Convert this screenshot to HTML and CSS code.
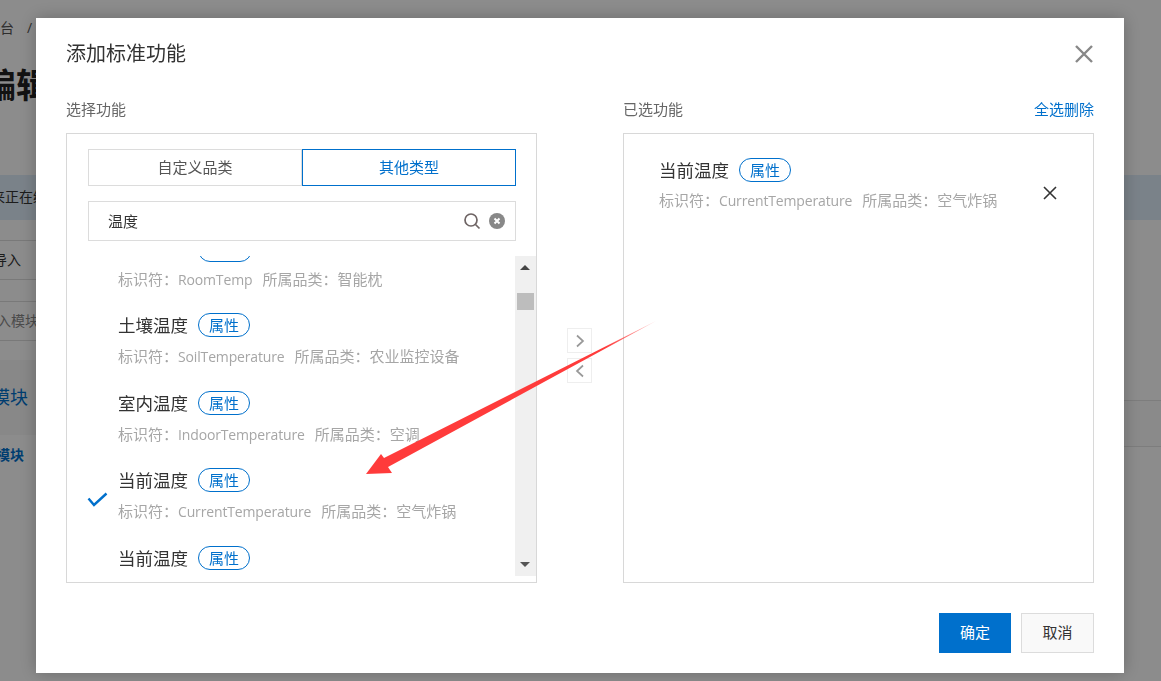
FILE: index.html
```html
<!DOCTYPE html>
<html lang="zh-CN">
<head>
  <meta charset="UTF-8" />
  <title>添加标准功能</title>
  <link rel="stylesheet" href="styles.css">
</head>
<body>
  <!-- PAGE BEHIND THE DIALOG -->
  <div class="page">
    <div class="crumb"><span>平台</span><span class="crumb-sep">/</span></div>
    <div class="page-title">编辑</div>
    <div class="notice">来正在编辑</div>
    <div class="page-input page-input-first">请导入</div>
    <div class="page-input page-input-second">输入模块名</div>
    <div class="module-wrap">
      <div class="module-side">
        <div class="module-band">默认模块</div>
        <div class="module-row">默认模块</div>
      </div>
      <div class="module-table">
        <div class="table-row"></div>
      </div>
    </div>
  </div>

  <div class="mask"></div>

  <!-- DIALOG -->
  <div class="dialog">
    <div class="dialog-head">
      <h2>添加标准功能</h2>
      <svg class="close-icon" width="20" height="20" viewBox="0 0 20 20"><path d="M2 2 18 18M18 2 2 18" /></svg>
    </div>

    <div class="columns">
      <div class="col">
        <div class="col-label"><span>选择功能</span></div>
        <div class="box box-left">
          <div class="tabs">
            <div class="tab">自定义品类</div>
            <div class="tab tab-on">其他类型</div>
          </div>
          <div class="search">
            <span class="search-text">温度</span>
            <svg class="search-icon" width="18" height="18" viewBox="0 0 18 18"><circle cx="8" cy="8" r="6" /><path d="M12.5 12.5 16.5 16.5" /></svg>
            <svg class="clear-icon" width="16" height="16" viewBox="0 0 16 16"><circle cx="8" cy="8" r="8" /><path d="M5.5 5.5 10.5 10.5M10.5 5.5 5.5 10.5" /></svg>
          </div>
          <div class="list-wrap">
            <div class="list">
              <div class="item item-cut">
                <div class="item-meta">标识符：<span class="ident">RoomTemp</span><span class="gap">所属品类：智能枕</span></div>
              </div>
              <div class="item">
                <div class="item-name">土壤温度<span class="tag">属性</span></div>
                <div class="item-meta">标识符：<span class="ident">SoilTemperature</span><span class="gap">所属品类：农业监控设备</span></div>
              </div>
              <div class="item">
                <div class="item-name">室内温度<span class="tag">属性</span></div>
                <div class="item-meta">标识符：<span class="ident">IndoorTemperature</span><span class="gap">所属品类：空调</span></div>
              </div>
              <div class="item">
                <svg class="check" width="21" height="16" viewBox="0 0 21 16"><path d="M1.5 6.5 7 13 19.5 1.5" /></svg>
                <div class="item-name">当前温度<span class="tag">属性</span></div>
                <div class="item-meta">标识符：<span class="ident">CurrentTemperature</span><span class="gap">所属品类：空气炸锅</span></div>
              </div>
              <div class="item">
                <div class="item-name">当前温度<span class="tag">属性</span></div>
              </div>
            </div>
            <div class="scrollbar">
              <span class="arrow-up"></span>
              <span class="thumb"></span>
              <span class="arrow-down"></span>
            </div>
          </div>
        </div>
      </div>

      <div class="mover">
        <div class="move-btn"><svg width="10" height="14" viewBox="0 0 10 14"><path d="M2 1.5 8 7 2 12.5" /></svg></div>
        <div class="move-btn"><svg width="10" height="14" viewBox="0 0 10 14"><path d="M8 1.5 2 7 8 12.5" /></svg></div>
      </div>

      <div class="col">
        <div class="col-label"><span>已选功能</span><a class="link">全选删除</a></div>
        <div class="box box-right">
          <div class="picked">
            <div>
              <div class="item-name">当前温度<span class="tag">属性</span></div>
              <div class="item-meta">标识符：<span class="ident">CurrentTemperature</span><span class="gap">所属品类：空气炸锅</span></div>
            </div>
            <svg class="remove-icon" width="14" height="14" viewBox="0 0 14 14"><path d="M1 1 13 13M13 1 1 13" /></svg>
          </div>
        </div>
      </div>
    </div>

    <div class="dialog-foot">
      <button class="btn btn-main">确定</button>
      <button class="btn">取消</button>
    </div>
  </div>

  <!-- annotation drawn over the screenshot -->
  <svg class="annot" width="1161" height="681" viewBox="0 0 1161 681">
    <defs>
      <linearGradient id="fade" gradientUnits="userSpaceOnUse" x1="656" y1="321" x2="605" y2="347">
        <stop offset="0" stop-color="#ff3b3b" stop-opacity=".3" />
        <stop offset="1" stop-color="#ff3b3b" />
      </linearGradient>
    </defs>
    <polygon fill="url(#fade)" points="656,321 384,458 381,454 366,474 392,473 388,467" />
  </svg>
</body>
</html>
```

FILE: styles.css
```css
*{box-sizing:border-box}
html,body{height:100%}
body{margin:0;overflow:hidden;background:#fff;color:#333;font-family:"Open Sans","Noto Sans CJK SC",sans-serif;font-size:15px}

/* page behind */
.page{height:681px;overflow:hidden;font-size:14px}
.crumb{height:50px;padding-top:18px;margin-left:-14px;line-height:20px;color:#555}
.crumb-sep{margin-left:13px}
.page-title{height:58px;margin-left:-18px;font-size:34px;line-height:70px;font-weight:bold;color:#222}
.notice{height:45px;margin-top:67px;line-height:43px;background:#dfedf9;text-indent:-9px}
.page-input{height:40px;border:1px solid #ddd;border-left:0;line-height:38px}
.page-input-first{width:60px;margin-top:20px;text-indent:-21px}
.page-input-second{width:60px;margin-top:21px;text-indent:-17px;color:#888}
.module-wrap{display:flex;margin-top:19px}
.module-side{width:200px}
.module-band{height:75px;font-size:18px;line-height:74px;text-indent:-44px;background:#f7f7f7;color:#0070cc}
.module-row{height:40px;line-height:40px;font-weight:bold;text-indent:-32px;color:#0070cc}
.module-table{flex:1;padding-top:40px}
.table-row{height:47px;border-top:1px solid #e4e4e4;border-bottom:1px solid #e4e4e4;background:#fcfcfc}
.mask{position:fixed;inset:0;background:rgba(0,0,0,.45)}

/* dialog */
.dialog{position:fixed;left:36px;top:18px;width:1088px;height:655px;padding:0 30px;background:#fff;box-shadow:0 0 16px rgba(0,0,0,.25);display:flex;flex-direction:column}
.dialog-head{height:72px;display:flex;align-items:center;justify-content:space-between}
.dialog-head h2{margin:0;font-size:20px;font-weight:normal;color:#333;line-height:28px}
.close-icon path{fill:none;stroke:#888;stroke-width:2.4}
.columns{display:flex;justify-content:space-between}
.col{width:471px}
.col-label{height:43px;display:flex;justify-content:space-between;align-items:center;color:#666;padding-bottom:6px}
.link{color:#0070cc}
.box{height:450px;border:1px solid #d8d8d8}

/* left box */
.box-left{padding:15px 0 0 21px}
.tabs{display:flex;width:428px}
.tab{width:214px;height:37px;border:1px solid #dcdcdc;line-height:34px;text-align:center;color:#555}
.tab-on{border-color:#0070cc;color:#0070cc}
.search{width:428px;height:40px;margin-top:15px;border:1px solid #dcdcdc;display:flex;align-items:center;padding:0 10px 0 19px}
.search-text{flex:1;color:#333;padding-bottom:2px}
.search-icon{margin-right:8px}
.search-icon circle,.search-icon path{fill:none;stroke:#6e6464;stroke-width:1.7}
.clear-icon circle{fill:#888}
.clear-icon path{stroke:#fff;stroke-width:2}
.list-wrap{display:flex;margin-left:-21px;margin-top:15px}
.list{width:448px;height:320px;overflow:hidden;position:relative}
.item{position:relative;height:77.5px;padding-left:51px}
.item-cut{height:57px;padding-top:13px}
.item-name{font-size:17.5px;line-height:24px;display:flex;align-items:center;height:24px;color:#333}
.tag{display:inline-block;width:52px;height:24px;margin-left:10px;border:1px solid #0070cc;border-radius:12px;font-size:15px;line-height:22px;text-align:center;color:#0070cc}
.item-meta{margin-top:9px;line-height:20px;color:#a6a6a6;white-space:nowrap}
.ident{font-size:14px;letter-spacing:-.15px}
.item-cut .item-meta{margin-top:0}
.item-cut::before{content:"";position:absolute;left:131px;top:-20px;width:52px;height:24px;border:1px solid #0070cc;border-radius:12px}
.gap{margin-left:10px}
.check{position:absolute;left:20px;top:24px}
.check path{fill:none;stroke:#0070cc;stroke-width:2.4}
.scrollbar{width:21px;height:320px;background:#f0f0f0;position:relative}
.thumb{position:absolute;left:2px;top:37px;width:17px;height:17px;background:#bdbdbd}
.arrow-up,.arrow-down{position:absolute;left:5px;width:0;height:0;border-left:5px solid transparent;border-right:5px solid transparent}
.arrow-up{top:9px;border-bottom:5px solid #444}
.arrow-down{bottom:9px;border-top:5px solid #555}

/* move buttons */
.mover{width:26px;display:flex;flex-direction:column;gap:5px;padding-top:238px}
.move-btn{width:25px;height:25px;border:1px solid #eee;display:flex;align-items:center;justify-content:center}
.move-btn path{fill:none;stroke:#999;stroke-width:1.7}

/* right box */
.box-right{padding:24px 35px}
.picked{display:flex;justify-content:space-between;align-items:flex-start}
.picked .item-meta{margin-top:8px}
.remove-icon{margin-top:28px;margin-right:1px}
.remove-icon path{fill:none;stroke:#333;stroke-width:1.6}

.dialog-foot{display:flex;justify-content:flex-end;gap:10px;margin-top:30px}
.btn{width:73px;height:40px;padding:0 0 4px;border:1px solid #dcdcdc;background:#f9f9f9;color:#333;font:inherit}
.btn-main{width:72px;background:#0070cc;border-color:#0070cc;color:#fff}

.annot{position:fixed;left:0;top:0;pointer-events:none}
```
